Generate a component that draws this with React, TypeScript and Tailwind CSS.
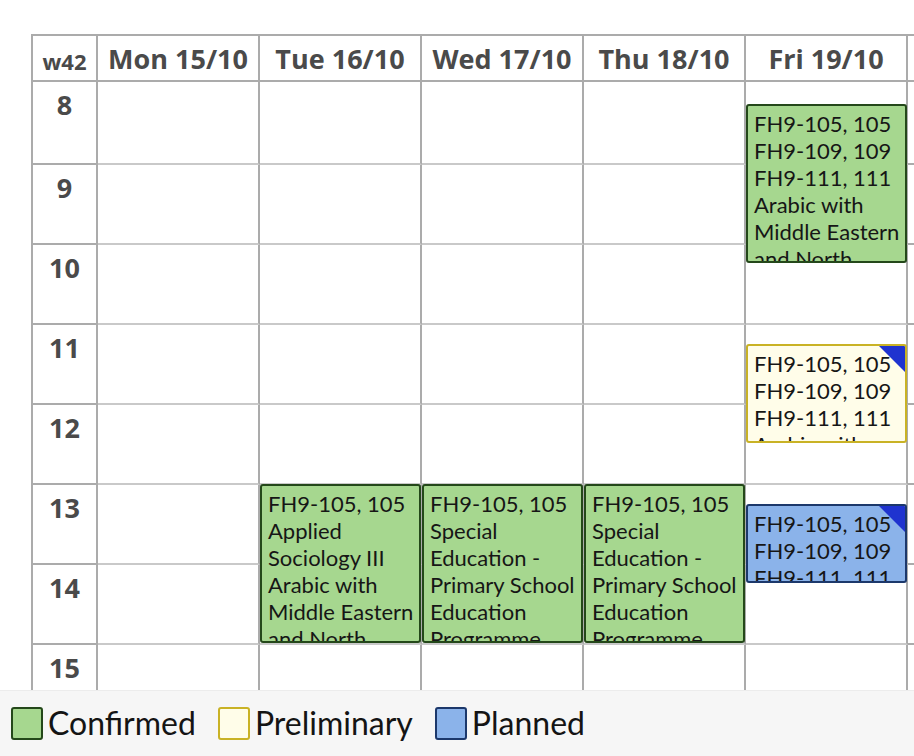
import React from 'react'

const hours = [8, 9, 10, 11, 12, 13, 14, 15, 16]
const days = ['Mon 15/10', 'Tue 16/10', 'Wed 17/10', 'Thu 18/10', 'Fri 19/10']

type Status = 'confirmed' | 'preliminary' | 'planned'

const statusStyle: Record<Status, string> = {
  confirmed: 'bg-[#a6d78f] border-[#24481a]',
  preliminary: 'bg-[#fffde9] border-[#c9b225]',
  planned: 'bg-[#8bb3ea] border-[#1c386b]',
}

const rooms = ['FH9-105, 105', 'FH9-109, 109', 'FH9-111, 111']

const events: { day: number; top: number; height: number; status: Status; lines: string[] }[] = [
  { day: 4, top: 70, height: 159, status: 'confirmed', lines: [...rooms, 'Arabic with', 'Middle Eastern', 'and North', 'African Studies'] },
  { day: 4, top: 310, height: 99, status: 'preliminary', lines: [...rooms, 'Arabic with', 'Middle Eastern'] },
  { day: 4, top: 470, height: 79, status: 'planned', lines: [...rooms, 'Arabic with'] },
  { day: 1, top: 450, height: 159, status: 'confirmed', lines: ['FH9-105, 105', 'Applied', 'Sociology III', 'Arabic with', 'Middle Eastern', 'and North', 'African Studies'] },
  { day: 2, top: 450, height: 159, status: 'confirmed', lines: ['FH9-105, 105', 'Special', 'Education -', 'Primary School', 'Education', 'Programme', 'Year 2'] },
  { day: 3, top: 450, height: 159, status: 'confirmed', lines: ['FH9-105, 105', 'Special', 'Education -', 'Primary School', 'Education', 'Programme', 'Year 2'] },
]

function HourColumn({ label }: { label: string }) {
  return (
    <div className="w-[65px] shrink-0 flex flex-col">
      <div className="h-[46px] border-r-2 border-b-2 border-[#ababab] flex justify-center items-center">
        <span className="text-[22px] leading-none font-bold mt-[5px]">{label}</span>
      </div>
      {hours.map((h, i) => (
        <div
          key={h}
          className={`${i === 0 ? 'h-[83px]' : 'h-[80px]'} border-r-2 border-b-2 border-[#ababab] flex justify-center pt-[9px]`}
        >
          <span className="text-[27px] leading-none font-bold">{h}</span>
        </div>
      ))}
    </div>
  )
}

function DayColumn({ label }: { label: string }) {
  return (
    <div className="w-[162px] shrink-0 flex flex-col">
      <div className="h-[46px] border-r-2 border-b-2 border-[#ababab] flex justify-center items-center">
        <span className="text-[27px] leading-none font-bold whitespace-nowrap">{label}</span>
      </div>
      {hours.map((h, i) => (
        <div
          key={h}
          className={`${i === 0 ? 'h-[83px]' : 'h-[80px]'} border-r-2 border-r-[#ababab] border-b-2 border-b-[#c9c9c9]`}
        />
      ))}
    </div>
  )
}

function Corner() {
  return (
    <svg className="absolute top-0 right-0" width="26" height="26" viewBox="0 0 26 26">
      <polygon points="0,0 26,0 26,26" fill="#1f33cf" />
    </svg>
  )
}

function Legend() {
  const items: { status: Status; label: string }[] = [
    { status: 'confirmed', label: 'Confirmed' },
    { status: 'preliminary', label: 'Preliminary' },
    { status: 'planned', label: 'Planned' },
  ]
  return (
    <div className="h-[66px] shrink-0 bg-[#f6f6f6] border-t border-[#ececec] flex items-center pl-[11px] gap-[22px] font-[Lato,sans-serif] text-[#141414]">
      {items.map((it) => (
        <div key={it.status} className="flex items-center gap-[5px]">
          <div className={`w-[32px] h-[33px] border-2 rounded-[3px] ${statusStyle[it.status]}`} />
          <span className="text-[32px] leading-none -mt-[2px]">{it.label}</span>
        </div>
      ))}
    </div>
  )
}

export default function App() {
  return (
    <div className="w-[914px] h-[756px] overflow-hidden flex flex-col bg-white">
      <div className="flex-1 overflow-hidden pt-[34px] pl-[31px]">
        <div className="relative w-max">
          <div className="flex border-l-2 border-t-2 border-[#ababab] text-[#4a4a4a] font-['Open_Sans',sans-serif]">
            <HourColumn label="w42" />
            {days.map((d) => (
              <DayColumn key={d} label={d} />
            ))}
            <HourColumn label="w43" />
          </div>
          {events.map((ev, i) => (
            <div
              key={i}
              className={`absolute w-[161px] border-2 rounded-[3px] overflow-hidden px-[6px] pt-[4px] font-[Lato,sans-serif] text-[22px] leading-[27px] text-[#161616] ${statusStyle[ev.status]}`}
              style={{ left: 67 + 162 * ev.day, top: ev.top, height: ev.height }}
            >
              {ev.lines.map((l, j) => (
                <div key={j} className="whitespace-nowrap">
                  {l}
                </div>
              ))}
              {ev.status !== 'confirmed' && <Corner />}
            </div>
          ))}
        </div>
      </div>
      <Legend />
    </div>
  )
}
